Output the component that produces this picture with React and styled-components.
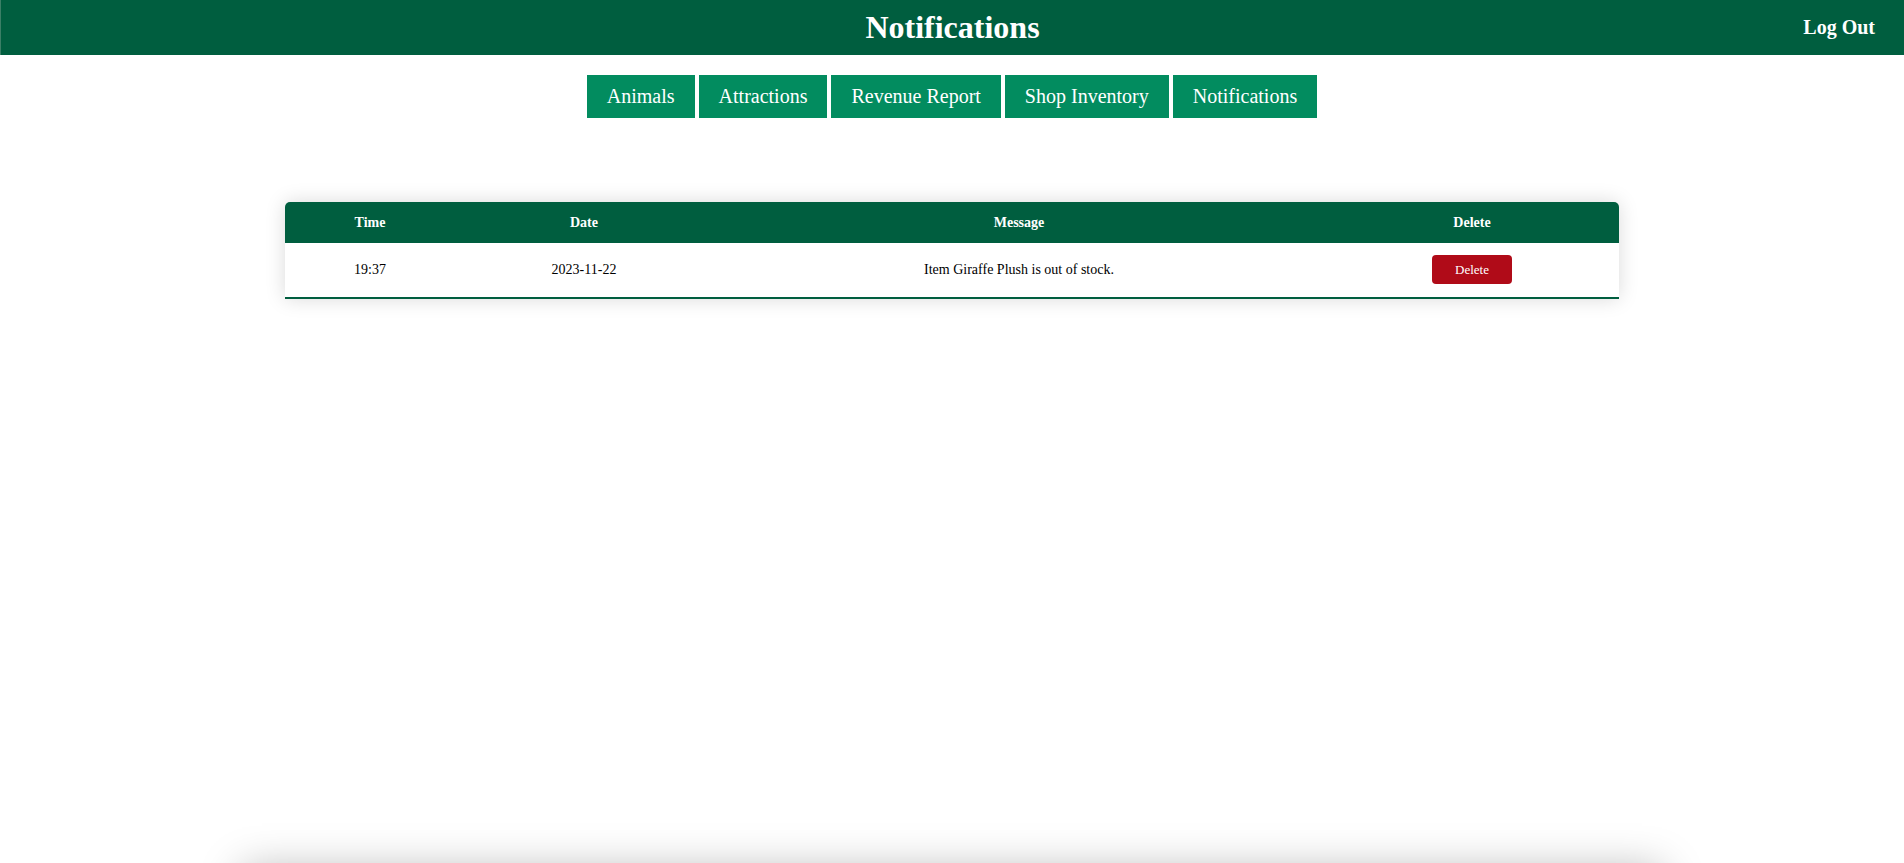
import React, { Component } from "react";
import styled, { createGlobalStyle } from "styled-components";

const GlobalStyle = createGlobalStyle`
  body {
    margin: 0;
    background: #ffffff;
    font-family: "Liberation Serif", "Times New Roman", serif;
  }
`;

const Header = styled.header`
  display: grid;
  grid-template-columns: 1fr auto 1fr;
  align-items: center;
  height: 55px;
  background: #005e3f;
  color: #ffffff;
  border-left: 1px solid #3b7f66;
  box-sizing: border-box;
`;

const Title = styled.h1`
  grid-column: 2;
  margin: 0;
  font-size: 32px;
  font-weight: bold;
`;

const LogOut = styled.a`
  justify-self: end;
  padding-right: 29px;
  font-size: 20px;
  font-weight: bold;
  cursor: pointer;
`;

const Nav = styled.nav`
  display: flex;
  justify-content: center;
  gap: 4px;
  margin-top: 20px;
`;

const NavButton = styled.button`
  height: 43px;
  padding: 0 20px;
  border: none;
  background: #028c5f;
  color: #ffffff;
  font-family: "Liberation Serif", "Times New Roman", serif;
  font-size: 20px;
  cursor: pointer;
`;

const Table = styled.table`
  width: 1334px;
  margin: 84px auto 0;
  border-collapse: separate;
  border-spacing: 0;
  box-shadow: 0 0 20px rgba(0, 0, 0, 0.15);
  border-radius: 5px 5px 0 0;
  table-layout: fixed;
`;

const HeadCell = styled.th`
  width: ${(p) => p.$width}px;
  padding: 12px 0;
  line-height: 17px;
  background: #005e3f;
  color: #ffffff;
  font-size: 14px;
  font-weight: bold;
  text-align: center;

  &:first-child {
    border-top-left-radius: 5px;
  }
  &:last-child {
    border-top-right-radius: 5px;
  }
`;

const Cell = styled.td`
  padding: 12px 0 13px;
  text-align: center;
  font-size: 14px;
  color: #000000;
  border-bottom: 2px solid #005e3f;
`;

const DeleteButton = styled.button`
  width: 80px;
  height: 29px;
  padding: 0;
  border: none;
  border-radius: 4px;
  background: #b00b18;
  color: #ffffff;
  font-family: "Liberation Serif", "Times New Roman", serif;
  font-size: 13px;
  vertical-align: middle;
  cursor: pointer;
`;

const Panel = styled.div`
  width: 1420px;
  height: 300px;
  margin: 570px auto 0;
  background: #ffffff;
  box-shadow: 0 0 40px rgba(0, 0, 0, 0.28);
`;

const tabs = [
  "Animals",
  "Attractions",
  "Revenue Report",
  "Shop Inventory",
  "Notifications",
];

const columns = [
  { label: "Time", width: 170 },
  { label: "Date", width: 258 },
  { label: "Message", width: 612 },
  { label: "Delete", width: 294 },
];

export default class App extends Component {
  state = {
    notifications: [
      {
        id: 1,
        time: "19:37",
        date: "2023-11-22",
        message: "Item Giraffe Plush is out of stock.",
      },
    ],
  };

  deleteNotification = (id) => {
    this.setState({
      notifications: this.state.notifications.filter((n) => n.id !== id),
    });
  };

  render() {
    return (
      <>
        <GlobalStyle />
        <Header>
          <Title>Notifications</Title>
          <LogOut>Log Out</LogOut>
        </Header>
        <Nav>
          {tabs.map((tab) => (
            <NavButton key={tab}>{tab}</NavButton>
          ))}
        </Nav>
        <Table>
          <thead>
            <tr>
              {columns.map((col) => (
                <HeadCell key={col.label} $width={col.width}>
                  {col.label}
                </HeadCell>
              ))}
            </tr>
          </thead>
          <tbody>
            {this.state.notifications.map((item) => (
              <tr key={item.id}>
                <Cell>{item.time}</Cell>
                <Cell>{item.date}</Cell>
                <Cell>{item.message}</Cell>
                <Cell>
                  <DeleteButton onClick={() => this.deleteNotification(item.id)}>
                    Delete
                  </DeleteButton>
                </Cell>
              </tr>
            ))}
          </tbody>
        </Table>
        <Panel />
      </>
    );
  }
}
